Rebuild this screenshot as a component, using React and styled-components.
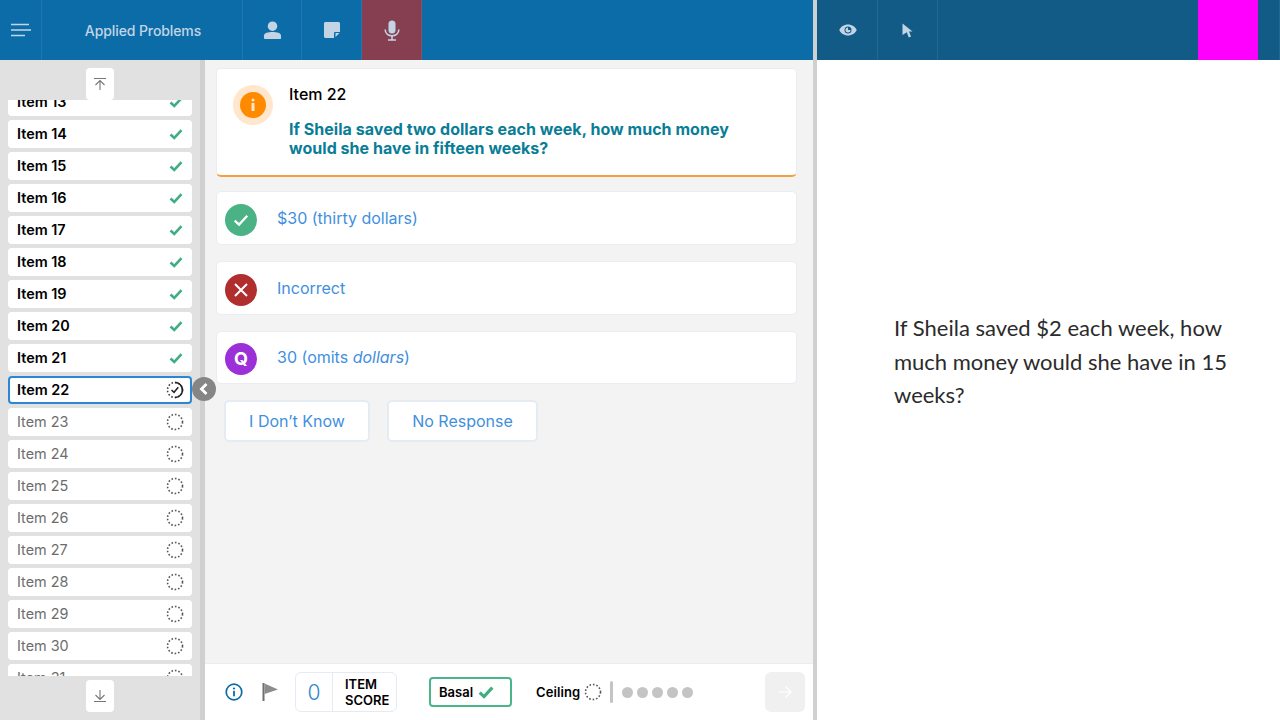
import React from "react";
import styled, { createGlobalStyle } from "styled-components";

const Global = createGlobalStyle`
  html, body { margin: 0; padding: 0; height: 100%; overflow: hidden; }
  body { font-family: Inter, "Liberation Sans", sans-serif; background: #fff; }
  * { box-sizing: border-box; }
`;

const Page = styled.div`display: flex; width: 1280px; height: 720px; overflow: hidden;`;
const LeftPane = styled.div`width: 813px; display: flex; flex-direction: column; flex: none;`;
const PaneDivider = styled.div`width: 4px; background: #d0d0d0; flex: none;`;
const RightPane = styled.div`flex: 1; display: flex; flex-direction: column; min-width: 0;`;

const Header = styled.header`
  height: 60px; flex: none; display: flex; align-items: stretch;
  background: ${p => p.$dark ? "#135b87" : "#0b6ca8"};
`;
const HeaderCell = styled.div`
  width: ${p => p.$w || 60}px; flex: none; display: flex; align-items: center; justify-content: center;
  border-right: 1px solid rgba(255,255,255,.08);
  background: ${p => p.$bg || "transparent"};
  color: #c3d5e5;
  padding-left: ${p => p.$pl || 0}px;
  font-size: 14px; font-weight: 500; letter-spacing: -.1px;
`;
const Spacer = styled.div`flex: 1;`;
const MagentaBlock = styled.div`width: 60px; flex: none; background: #ff00ff;`;

const Work = styled.div`flex: 1; display: flex; min-height: 0; position: relative;`;

const Sidebar = styled.aside`
  width: 205px; flex: none; display: flex; flex-direction: column;
  background: #e1e1e1; border-right: 5px solid #d0d0d0; padding: 8px 8px 8px;
`;
const ScrollButton = styled.button`
  width: 28px; height: 32px; flex: none; align-self: center; padding: 0; border: 0; border-radius: 4px;
  background: #fff; display: flex; align-items: center; justify-content: center;
  margin-top: ${p => p.$mt || 0}px;
`;
const ListClip = styled.div`flex: 1; overflow: hidden; min-height: 0;`;
const ItemList = styled.ul`list-style: none; margin: -12px 0 0; padding: 0; display: flex; flex-direction: column; gap: 4px;`;
const ItemRow = styled.li`
  height: 28px; flex: none; display: flex; align-items: center; justify-content: space-between;
  background: #fff; border-radius: 4px; padding: 0 ${p => p.$active ? 6 : 8}px 2px ${p => p.$active ? 7 : 9}px;
  border: ${p => p.$active ? "2px solid #2d87d0" : "0"};
  font-size: 14.4px; font-weight: ${p => p.$done ? 600 : 400};
  color: ${p => p.$done ? "#000" : "#6d6d6d"};
`;
const RowIcon = styled.span`display: flex; width: 18px; justify-content: center; margin-top: 2px; padding-left: ${p => p.$pl || 0}px;`;

const Collapse = styled.div`
  position: absolute; left: 192px; top: 317px; width: 24px; height: 24px; border-radius: 50%;
  background: #858585; display: flex; align-items: center; justify-content: center; z-index: 2;
`;

const Main = styled.main`flex: 1; display: flex; flex-direction: column; min-width: 0; background: #f3f3f4;`;
const Content = styled.div`flex: 1; padding: 8px 16px 0 11px; display: flex; flex-direction: column;`;
const PromptCard = styled.section`
  height: 109px; background: #fff; border: 1px solid #e9edf3; border-bottom: 2px solid #f5a03c; border-radius: 5px;
  display: flex; padding: 15px 16px 0 16px; gap: 16px; margin-bottom: 14px;
`;
const Halo = styled.div`
  width: 40px; height: 40px; border-radius: 50%; background: #ffe6cc; flex: none; margin-top: 1px;
  display: flex; align-items: center; justify-content: center;
`;
const InfoDisc = styled.div`
  width: 26px; height: 26px; border-radius: 50%; background: #ff8a00;
  display: flex; align-items: center; justify-content: center;
`;
const PromptBody = styled.div`display: flex; flex-direction: column;`;
const PromptTitle = styled.div`font-size: 16px; font-weight: 500; color: #000; line-height: 20px; margin-bottom: 16px;`;
const PromptText = styled.div`font-size: 16px; font-weight: 700; color: #0a7d96; line-height: 19px; width: 480px; letter-spacing: .04px;`;

const Option = styled.div`
  height: ${p => p.$h || 54}px; background: #fff; border: 1px solid #e9edf3; border-radius: 5px;
  display: flex; align-items: center; padding: 0 0 ${p => 54 - (p.$h || 54)}px 8px; gap: 20px; margin-bottom: 16px;
  font-size: 16px; color: #3f8fe0;
`;
const OptionDisc = styled.div`
  width: 32px; height: 32px; border-radius: 50%; background: ${p => p.$c}; flex: none; margin-top: 3px;
  display: flex; align-items: center; justify-content: center;
  color: #fff; font-size: 18px; font-weight: 700;
`;
const ButtonRow = styled.div`display: flex; gap: 17px; padding-left: 8px;`;
const GhostButton = styled.button`
  height: 42px; width: ${p => p.$w}px; background: #fff; border: 2px solid #e5ebf3; border-radius: 5px;
  font: 400 16px Inter, sans-serif; color: #3f8fe0; padding: 0;
`;

const Footer = styled.footer`
  height: 57px; flex: none; background: #fff; border-top: 1px solid #ececec;
  display: flex; align-items: center; padding-left: 20px; position: relative;
`;
const FlagIcon = styled.svg`margin-left: 18px;`;
const ScoreBox = styled.div`
  width: 102px; height: 40px; display: flex; border: 1px solid #e5ebf3; border-radius: 6px; margin-left: 16px;
`;
const ScoreValue = styled.div`
  width: 37px; border-right: 1px solid #e5ebf3; display: flex; align-items: center; justify-content: center;
  color: #2d87d0; font-size: 21px; font-weight: 300;
`;
const ScoreLabel = styled.div`
  padding: 3px 0 0 12px; font-size: 13px; font-weight: 600; line-height: 16px; color: #000;
`;
const BasalBox = styled.div`
  width: 83px; height: 30px; margin-left: 32px; border: 2px solid #4ab58a; border-radius: 4px;
  display: flex; align-items: center; padding-left: 8px; gap: 5px;
  font-size: 13px; font-weight: 600; color: #000;
`;
const CeilingLabel = styled.span`font-size: 13px; font-weight: 600; color: #000; margin-left: 24px; letter-spacing: .1px;`;
const VBar = styled.div`width: 3px; height: 22px; background: #c4c4c4; border-radius: 2px; margin: 0 9px 0 8px;`;
const Dots = styled.div`display: flex; gap: 4px;`;
const Dot = styled.span`width: 11px; height: 11px; border-radius: 50%; background: #c4c4c4;`;
const NextButton = styled.button`
  position: absolute; right: 8px; top: 8px; width: 40px; height: 40px; border: 0; border-radius: 6px; background: #f0f0f0;
  padding: 0; display: flex; align-items: center; justify-content: center;
`;

const Reader = styled.div`flex: 1; padding: 251px 50px 0 77px; background: #fff;`;
const ReaderText = styled.p`
  margin: 0; font-family: Lato, "Noto Sans", sans-serif; font-size: 22px; line-height: 33.5px; color: #2b2b2b; width: 340px;
`;

const Check = ({ size = 14, color = "#3fae80", w = 2.6 }) => (
  <svg width={size} height={size} viewBox="0 0 14 14"><path d="M1.5 7.5 5.3 11 12.5 3.2" fill="none" stroke={color} strokeWidth={w} /></svg>
);
const Ring = ({ ml = 0 }) => (
  <svg width="18" height="18" viewBox="0 0 18 18" style={ml ? { marginLeft: ml } : undefined}>
    <circle cx="9" cy="9" r="7.5" fill="none" stroke="#555" strokeWidth="1.6" strokeDasharray="1.6 1.9" />
  </svg>
);
const ActiveRing = () => (
  <svg width="18" height="18" viewBox="0 0 18 18">
    <circle cx="9" cy="9" r="7.5" fill="none" stroke="#444" strokeWidth="1.6" strokeDasharray="1.6 1.9" />
    <path d="M9 1.5A7.5 7.5 0 0 1 9 16.5" fill="none" stroke="#222" strokeWidth="1.6" />
    <path d="M5.5 9 8 11.3 12.3 6.3" fill="none" stroke="#222" strokeWidth="1.5" />
  </svg>
);

const items = Array.from({ length: 19 }, (_, i) => 13 + i);

export default function App() {
  return (
    <Page>
      <Global />
      <LeftPane>
        <Header>
          <HeaderCell $w={42}>
            <svg width="22" height="14" viewBox="0 0 22 14"><path d="M1 1.5H19M1 7H21M1 12.5H15" stroke="#c3d5e5" strokeWidth="1.6" fill="none" /></svg>
          </HeaderCell>
          <HeaderCell $w={201} $pl={2}>Applied Problems</HeaderCell>
          <HeaderCell $w={59}>
            <svg width="19" height="19" viewBox="0 0 20 20" fill="#c3d5e5"><circle cx="10" cy="5.5" r="5" /><path d="M1 18v-2.5C1 12.5 5.5 11.5 10 11.5s9 1 9 4V18a1 1 0 0 1-1 1H2a1 1 0 0 1-1-1z" /></svg>
          </HeaderCell>
          <HeaderCell $pl={1}>
            <svg width="18" height="18" viewBox="0 0 18 18" fill="#c3d5e5"><path d="M1 2.5C1 1.7 1.7 1 2.5 1h13c.8 0 1.5.7 1.5 1.5V11H12a1 1 0 0 0-1 1V17H2.5C1.7 17 1 16.3 1 15.5z" /><path d="M12.5 12H16.5L12.5 16z" /></svg>
          </HeaderCell>
          <HeaderCell $bg="#863f50">
            <svg width="16" height="21" viewBox="0 0 16 21" fill="none"><rect x="4.5" y="0.5" width="7" height="13" rx="3.5" fill="#c3d5e5" /><path d="M1.2 9.5c0 3.800 3 6.200 6.800 6.200s6.800-2.400 6.800-6.200" stroke="#c3d5e5" strokeWidth="1.6" /><path d="M8 15.500V20M4 20H12" stroke="#c3d5e5" strokeWidth="1.6" /></svg>
          </HeaderCell>
        </Header>
        <Work>
          <Sidebar>
            <ScrollButton aria-label="top">
              <svg width="14" height="14" viewBox="0 0 14 14" fill="none" stroke="#777" strokeWidth="1.1"><path d="M1 1.5H13M7 13V3.500M2.500 8 7 3.500 11.500 8" /></svg>
            </ScrollButton>
            <ListClip>
              <ItemList>
                {items.map(n => (
                  <ItemRow key={n} $done={n <= 22} $active={n === 22}>
                    Item {n}
                    <RowIcon $pl={n < 22 ? 2 : 0}>{n < 22 ? <Check /> : n === 22 ? <ActiveRing /> : <Ring />}</RowIcon>
                  </ItemRow>
                ))}
              </ItemList>
            </ListClip>
            <ScrollButton aria-label="bottom" $mt={4}>
              <svg width="14" height="14" viewBox="0 0 14 14" fill="none" stroke="#777" strokeWidth="1.1"><path d="M1 12.500H13M7 1V10.500M2.500 6 7 10.500 11.500 6" /></svg>
            </ScrollButton>
          </Sidebar>
          <Collapse>
            <svg width="12" height="14" viewBox="0 0 12 14" fill="none" stroke="#fff" strokeWidth="2.8"><path d="M8.500 2 3.500 7 8.500 12" /></svg>
          </Collapse>
          <Main>
            <Content>
              <PromptCard>
                <Halo><InfoDisc>
                  <svg width="6" height="14" viewBox="0 0 6 14" fill="#ffe6cc"><circle cx="3" cy="2" r="1.5" /><rect x="1.5" y="5" width="3" height="8" rx=".5" /></svg>
                </InfoDisc></Halo>
                <PromptBody>
                  <PromptTitle>Item 22</PromptTitle>
                  <PromptText>If Sheila saved two dollars each week, how much money would she have in fifteen weeks?</PromptText>
                </PromptBody>
              </PromptCard>
              <Option>
                <OptionDisc $c="#4ab284"><Check size={16} color="#fff" w={2} /></OptionDisc>
                $30 (thirty dollars)
              </Option>
              <Option>
                <OptionDisc $c="#b02e2e">
                  <svg width="16" height="16" viewBox="0 0 16 16" stroke="#fff" strokeWidth="2" fill="none"><path d="M2 2 14 14M14 2 2 14" /></svg>
                </OptionDisc>
                Incorrect
              </Option>
              <Option $h={53}>
                <OptionDisc $c="#9b30d9">Q</OptionDisc>
                <span>30 (omits <em>dollars</em>)</span>
              </Option>
              <ButtonRow>
                <GhostButton $w={146}>I Don’t Know</GhostButton>
                <GhostButton $w={151}>No Response</GhostButton>
              </ButtonRow>
            </Content>
            <Footer>
              <svg width="18" height="18" viewBox="0 0 18 18" fill="none"><circle cx="9" cy="9" r="7.8" stroke="#0b6ca8" strokeWidth="1.7" /><circle cx="9" cy="5.5" r="1.1" fill="#0b6ca8" /><rect x="8.1" y="7.8" width="1.8" height="5.5" fill="#0b6ca8" /></svg>
              <FlagIcon width="18" height="20" viewBox="0 0 18 20"><path d="M1.5 1H3.500V19H1.500z" fill="#6f6f6f" /><path d="M3.500 1.500 17 7.500 3.500 12z" fill="#8c8c8c" /></FlagIcon>
              <ScoreBox>
                <ScoreValue>0</ScoreValue>
                <ScoreLabel>ITEM<br />SCORE</ScoreLabel>
              </ScoreBox>
              <BasalBox>Basal <Check size={16} color="#3fae80" w={2.8} /></BasalBox>
              <CeilingLabel>Ceiling</CeilingLabel>
              <Ring ml={4} />
              <VBar />
              <Dots>{[0, 1, 2, 3, 4].map(i => <Dot key={i} />)}</Dots>
              <NextButton aria-label="next">
                <svg width="14" height="14" viewBox="0 0 14 14" fill="none" stroke="#fff" strokeWidth="1.2"><path d="M1 7H13M7.500 1.500 13 7 7.500 12.500" /></svg>
              </NextButton>
            </Footer>
          </Main>
        </Work>
      </LeftPane>
      <PaneDivider />
      <RightPane>
        <Header $dark>
          <HeaderCell $w={61} $pl={2}>
            <svg width="18" height="12" viewBox="0 0 18 12"><path fillRule="evenodd" fill="#c3d5e5" d="M9 .5C5 .5 1.800 2.800.3 6 1.800 9.200 5 11.500 9 11.500S16.200 9.200 17.700 6C16.200 2.800 13 .5 9 .5zM9 2.500a3.500 3.500 0 1 1 0 7 3.500 3.500 0 0 1 0-7z" /><path d="M9 3.500V6h2.500A2.500 2.500 0 1 1 9 3.500z" fill="#c3d5e5" /></svg>
          </HeaderCell>
          <HeaderCell>
            <svg width="11" height="15" viewBox="0 0 11 15"><path d="M.5.500 10.500 8.500H7l2 5-2.200 1-2-5.200L.5 12z" fill="#c3d5e5" /></svg>
          </HeaderCell>
          <Spacer />
          <MagentaBlock />
          <HeaderCell $w={22} />
        </Header>
        <Reader>
          <ReaderText>If Sheila saved $2 each week, how much money would she have in 15 weeks?</ReaderText>
        </Reader>
      </RightPane>
    </Page>
  );
}
